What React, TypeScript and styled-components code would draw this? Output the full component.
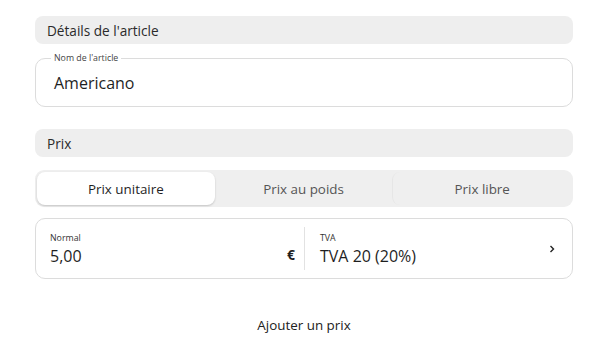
import React, { useState } from "react";
import styled, { createGlobalStyle } from "styled-components";

const GlobalStyle = createGlobalStyle`
  html, body {
    margin: 0;
    padding: 0;
    background: #ffffff;
  }
  body {
    font-family: "Open Sans", "Liberation Sans", sans-serif;
    color: #1f1f1f;
  }
`;

const Page = styled.div`
  width: 538px;
  padding: 16px 27px 0 35px;
  display: flex;
  flex-direction: column;
`;

const SectionTitle = styled.div<{ $gap: number }>`
  height: 28px;
  display: flex;
  align-items: center;
  padding: 0 12px;
  border-radius: 8px;
  background-color: #eeeeee;
  font-size: 13.6px;
  color: #2a2a2a;
  margin-bottom: ${(p) => p.$gap}px;
`;

const OutlinedField = styled.div`
  position: relative;
  height: 49px;
  box-sizing: border-box;
  margin-bottom: 22px;
  padding: 0 18px;
  border: 1px solid #dcdcdc;
  border-radius: 10px;
  display: flex;
  align-items: center;
`;

const FloatingLabel = styled.span`
  position: absolute;
  top: -6px;
  left: 15px;
  padding: 0 3px;
  background: #ffffff;
  font-size: 8.8px;
  line-height: 11px;
  color: #444;
`;

const FieldValue = styled.div`
  font-size: 16px;
  font-weight: 500;
  color: #1f1f1f;
`;

const Tabs = styled.div`
  height: 37px;
  box-sizing: border-box;
  padding: 2px;
  border-radius: 9px;
  background: #efefef;
  display: flex;
  margin-bottom: 11px;
`;

const Tab = styled.button<{ $active: boolean; $divided: boolean }>`
  flex: 1;
  border: none;
  border-left: ${(p) => (p.$divided ? "1px solid #e6e6e6" : "none")};
  border-radius: 8px;
  font-family: inherit;
  font-size: 13.4px;
  cursor: pointer;
  color: ${(p) => (p.$active ? "#1f1f1f" : "#555555")};
  background: ${(p) => (p.$active ? "#ffffff" : "transparent")};
  box-shadow: ${(p) => (p.$active ? "0 1px 2px rgba(0,0,0,0.18)" : "none")};
`;

const PriceCard = styled.div`
  height: 61px;
  box-sizing: border-box;
  border: 1px solid #dcdcdc;
  border-radius: 10px;
  display: flex;
  align-items: center;
  padding: 8px 0;
`;

const PriceCell = styled.div<{ $divider?: boolean }>`
  flex: 0 0 50%;
  box-sizing: border-box;
  height: 100%;
  display: flex;
  align-items: center;
  padding: 0 ${(p) => (p.$divider ? "16px 0 15px" : "9px 0 14px")};
  border-left: ${(p) => (p.$divider ? "1px solid #e2e2e2" : "none")};
`;

const CellText = styled.div`
  flex: 1;
  display: flex;
  flex-direction: column;
  gap: 2px;
  padding-top: 1px;
`;

const SmallLabel = styled.span`
  font-size: 8.8px;
  line-height: 12px;
  color: #333;
`;

const BigValue = styled.span`
  font-size: 16px;
  line-height: 20px;
  font-weight: 500;
  color: #1f1f1f;
`;

const Currency = styled.span`
  font-size: 14px;
  font-weight: 700;
  padding-top: 12px;
`;

const Chevron = styled.svg`
  width: 8px;
  height: 8px;
`;

const AddPrice = styled.button`
  align-self: center;
  margin-top: 36px;
  border: none;
  background: none;
  font-family: inherit;
  font-size: 13.4px;
  color: #222;
  cursor: pointer;
`;

const tabs = ["Prix unitaire", "Prix au poids", "Prix libre"];

export default function App() {
  const [active, setActive] = useState(0);

  return (
    <>
      <GlobalStyle />
      <Page>
        <SectionTitle $gap={14}>Détails de l'article</SectionTitle>
        <OutlinedField>
          <FloatingLabel>Nom de l'article</FloatingLabel>
          <FieldValue>Americano</FieldValue>
        </OutlinedField>

        <SectionTitle $gap={13}>Prix</SectionTitle>
        <Tabs>
          {tabs.map((t, i) => (
            <Tab
              key={t}
              $active={active === i}
              $divided={i > 0 && active !== i && active !== i - 1}
              onClick={() => setActive(i)}
            >
              {t}
            </Tab>
          ))}
        </Tabs>

        <PriceCard>
          <PriceCell>
            <CellText>
              <SmallLabel>Normal</SmallLabel>
              <BigValue>5,00</BigValue>
            </CellText>
            <Currency>€</Currency>
          </PriceCell>
          <PriceCell $divider>
            <CellText>
              <SmallLabel>TVA</SmallLabel>
              <BigValue>TVA 20 (20%)</BigValue>
            </CellText>
            <Chevron viewBox="0 0 8 8">
              <path d="M2.5 1 L5.5 4 L2.5 7" fill="none" stroke="#222" strokeWidth="1.4" />
            </Chevron>
          </PriceCell>
        </PriceCard>

        <AddPrice>Ajouter un prix</AddPrice>
      </Page>
    </>
  );
}
